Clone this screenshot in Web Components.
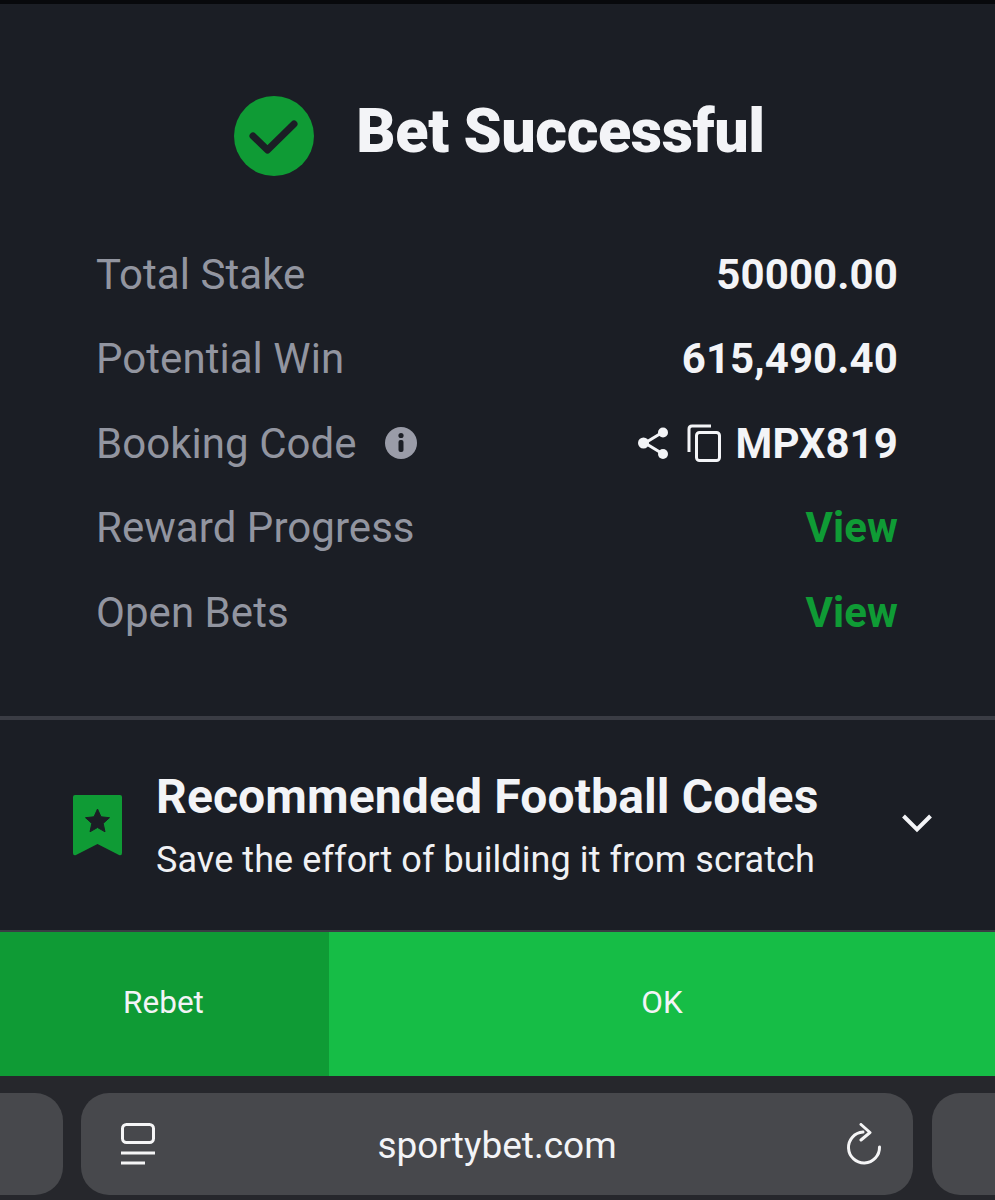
<!DOCTYPE html>
<html>
<head>
<meta charset="utf-8">
<style>
  html, body { margin: 0; background: #26272c; }
  body { font-family: Roboto, "Liberation Sans", sans-serif; width: 995px; height: 1200px; overflow: hidden; }
</style>
</head>
<body>
<bet-result>
  <result-row label="Total Stake">50000.00</result-row>
  <result-row label="Potential Win">615,490.40</result-row>
  <result-row label="Booking Code" info>
    <svg slot="icons" width="34" height="36" viewBox="0 0 34 36" fill="none">
      <path d="M27 7 9 18l18 11" stroke="#f3f4f7" stroke-width="3"/>
      <circle cx="27" cy="7.500" r="5" fill="#f3f4f7"/>
      <circle cx="7.500" cy="18" r="5.500" fill="#f3f4f7"/>
      <circle cx="27" cy="29" r="5" fill="#f3f4f7"/>
    </svg>
    <svg slot="icons" width="34" height="38" viewBox="0 0 34 38" fill="none" stroke="#f3f4f7" stroke-width="3">
      <path d="M24 2H5Q2 2 2 5V28"/>
      <rect x="9.500" y="8.500" width="23" height="28" rx="3"/>
    </svg>
    MPX819
  </result-row>
  <result-row label="Reward Progress" link>View</result-row>
  <result-row label="Open Bets" link>View</result-row>
</bet-result>
<code-promo title="Recommended Football Codes" text="Save the effort of building it from scratch"></code-promo>
<action-bar></action-bar>
<browser-bar url="sportybet.com"></browser-bar>

<script>
class BetResult extends HTMLElement {
  constructor() {
    super();
    this.attachShadow({ mode: 'open' }).innerHTML = `
      <style>
        :host { display: block; background: #1b1e25; border-top: 4px solid #08090c; border-bottom: 4px solid #3a3c44; height: 712px; }
        .head { display: flex; align-items: center; justify-content: center; gap: 42px; padding-top: 92px; height: 80px; padding-left: 4px; }
        h1 { margin: 0 0 10px; font: 900 61px/80px Roboto, sans-serif; color: #f3f4f7; letter-spacing: -0.4px; }
        .rows { padding: 56px 97px 0 96px; }
      </style>
      <div class="head">
        <svg width="80" height="80" viewBox="0 0 80 80">
          <circle cx="40" cy="40" r="40" fill="#0f9b35"/>
          <path d="M19 40 33.500 54 60 28" fill="none" stroke="#1b1e25" stroke-width="7" stroke-linecap="round" stroke-linejoin="round"/>
        </svg>
        <h1>Bet Successful</h1>
      </div>
      <div class="rows"><slot></slot></div>`;
  }
}

class ResultRow extends HTMLElement {
  constructor() {
    super();
    this.attachShadow({ mode: 'open' }).innerHTML = `
      <style>
        :host { display: flex; align-items: center; justify-content: space-between; height: 84.5px; font-family: Roboto, sans-serif; font-size: 42px; }
        .label { display: flex; align-items: center; gap: 28px; color: #9295a0; letter-spacing: 0.05px; }
        .value { display: flex; align-items: center; font-weight: 700; color: #f3f4f7; letter-spacing: 0.1px; }
        :host([link]) .value { color: #0f9b35; }
        .icons { display: flex; align-items: center; gap: 17px; margin-right: 15px; }
        .info { display: none; }
        :host([info]) .info { display: block; }
        ::slotted(svg) { display: block; }
      </style>
      <div class="label">
        <span class="text"></span>
        <svg class="info" width="32" height="32" viewBox="0 0 32 32">
          <circle cx="16" cy="16" r="16" fill="#9a9ca8"/>
          <circle cx="16" cy="8.500" r="2.600" fill="#1b1e25"/>
          <rect x="13.500" y="13" width="5" height="12" rx="2" fill="#1b1e25"/>
        </svg>
      </div>
      <div class="value"><span class="icons"><slot name="icons"></slot></span><slot></slot></div>`;
    this.shadowRoot.querySelector('.text').textContent = this.getAttribute('label');
  }
}

class CodePromo extends HTMLElement {
  constructor() {
    super();
    this.attachShadow({ mode: 'open' }).innerHTML = `
      <style>
        :host { display: flex; align-items: center; height: 210px; background: #1b1e25; border-bottom: 2px solid #3a3c44; padding-left: 73px; font-family: Roboto, sans-serif; }
        .badge { display: block; margin: 2px 35px 0 0; }
        .copy { flex: 1; margin-top: 2px; margin-left: -1px; }
        .title { font-size: 48px; line-height: 56px; font-weight: 700; color: #f3f4f7; letter-spacing: 0.13px; }
        .text { font-size: 36px; line-height: 48px; margin-top: 11px; color: #f0f1f4; letter-spacing: 0.08px; }
        .chev { display: block; margin-right: 62px; margin-bottom: 4px; }
      </style>
      <svg class="badge" width="49" height="62" viewBox="0 0 49 62">
        <path d="M2 0H47Q49 0 49 2V58Q49 61 46 60L24.500 49 3 60Q0 61 0 58V2Q0 0 2 0Z" fill="#0f9b35"/>
        <path d="M24.500 14 28 21.800 36.500 22.700 30.200 28.400 32 36.800 24.500 32.500 17 36.800 18.800 28.400 12.500 22.700 21 21.800Z" fill="#1b1e25" stroke="#1b1e25" stroke-linejoin="round"/>
      </svg>
      <div class="copy"><div class="title"></div><div class="text"></div></div>
      <svg class="chev" width="32" height="20" viewBox="0 0 32 20" fill="none">
        <path d="M2.500 3 16 16.500 29.500 3" stroke="#f3f4f7" stroke-width="4"/>
      </svg>`;
    this.shadowRoot.querySelector('.title').textContent = this.getAttribute('title');
    this.shadowRoot.querySelector('.text').textContent = this.getAttribute('text');
  }
}

class ActionBar extends HTMLElement {
  constructor() {
    super();
    this.attachShadow({ mode: 'open' }).innerHTML = `
      <style>
        :host { display: flex; height: 144px; font: 400 31.5px Roboto, sans-serif; color: #f3f4f7; }
        div { display: flex; align-items: center; justify-content: center; padding-bottom: 3px; box-sizing: border-box; }
        .rebet { width: 329px; background: #0f9b35; padding-right: 2px; }
        .ok { flex: 1; background: #16bd46; }
      </style>
      <div class="rebet">Rebet</div>
      <div class="ok">OK</div>`;
  }
}

class BrowserBar extends HTMLElement {
  constructor() {
    super();
    this.attachShadow({ mode: 'open' }).innerHTML = `
      <style>
        :host { display: flex; gap: 18px; height: 124px; box-sizing: border-box; padding-top: 17px; margin-left: -40px; width: 1075px; background: #26272c; font-family: Roboto, sans-serif; overflow: hidden; }
        .tab { flex: none; height: 102px; border-radius: 28px; background: #47484c; }
        .side { width: 103px; }
        .side:last-child { margin-left: 1px; }
        .main { width: 832px; display: flex; align-items: center; justify-content: space-between; padding: 0 31px 0 40px; box-sizing: border-box; }
        .url { font-size: 37px; color: #f3f4f7; margin: 2px 7px 0 0; }
        svg { display: block; }
      </style>
      <div class="tab side"></div>
      <div class="tab main">
        <svg width="34" height="42" viewBox="0 0 34 42" fill="none" stroke="#f5f5f6" stroke-width="3">
          <rect x="1.500" y="1.500" width="31" height="18" rx="4"/>
          <path d="M0 30H34M0 40H24"/>
        </svg>
        <span class="url"></span>
        <svg width="36" height="42" viewBox="0 0 36 42" fill="none" stroke="#f5f5f6" stroke-width="3" stroke-linecap="round" stroke-linejoin="round">
          <path d="M17 9A15.500 15.500 0 1 0 33.500 24"/>
          <path d="M15 1.500 24 9.500 15 17"/>
        </svg>
      </div>
      <div class="tab side"></div>`;
    this.shadowRoot.querySelector('.url').textContent = this.getAttribute('url');
  }
}

customElements.define('bet-result', BetResult);
customElements.define('result-row', ResultRow);
customElements.define('code-promo', CodePromo);
customElements.define('action-bar', ActionBar);
customElements.define('browser-bar', BrowserBar);
</script>
</body>
</html>
